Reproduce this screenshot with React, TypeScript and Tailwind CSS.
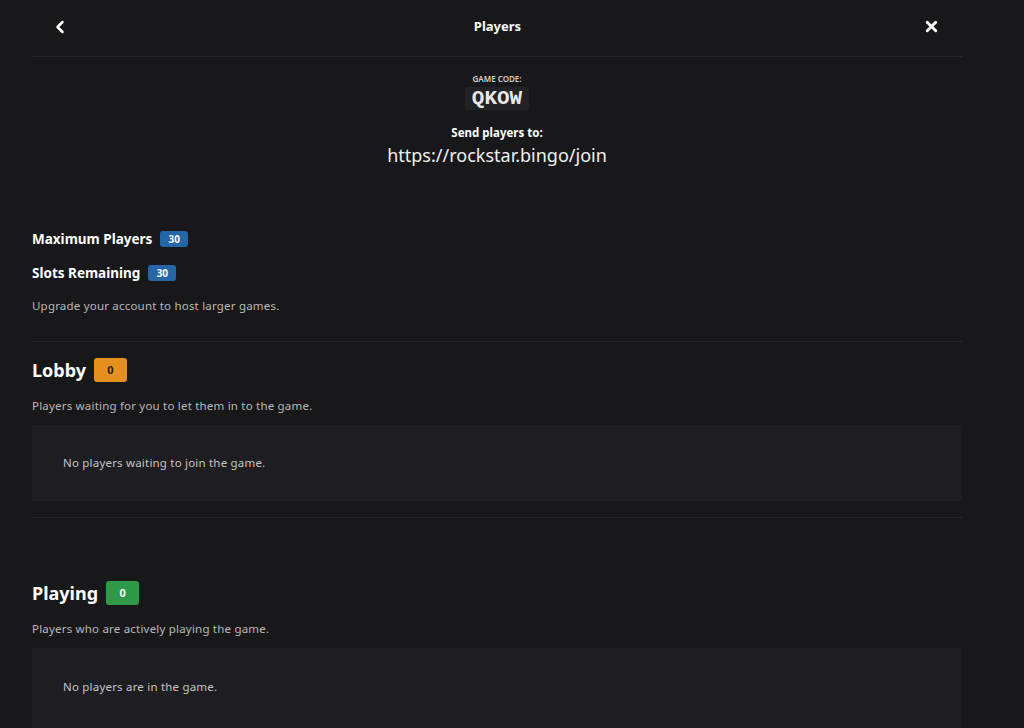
import { ChevronLeft, X } from 'lucide-react';

const font = { fontFamily: '"Noto Sans", "Open Sans", sans-serif' };

const Badge = ({ value, color, big }: { value: number; color: string; big?: boolean }) => (
    <span
        className={`inline-flex items-center justify-center rounded-[3px] font-bold text-white ${color} ${big ? 'h-[24px] w-[33px] text-[11px]' : 'h-[16px] w-[28px] text-[10px]'}`}
    >
        {value}
    </span>
);

const App = () => {
    return (
        <div className="h-[728px] w-full overflow-hidden bg-[#18181a] text-white" style={font}>
            <div className="ml-[32px] w-[930px]">
                <header className="flex h-[57px] items-center justify-between border-b border-[#28282a] pb-[3px]">
                    <button className="ml-[18px] flex h-[20px] w-[20px] items-center justify-center">
                        <ChevronLeft size={20} strokeWidth={3} className="text-white" />
                    </button>
                    <h1 className="ml-[3px] text-[13px] font-bold">Players</h1>
                    <button className="mr-[20px] flex h-[20px] w-[20px] items-center justify-center">
                        <X size={17} strokeWidth={4} className="text-white" />
                    </button>
                </header>

                <section className="flex flex-col items-center pt-[16px]">
                    <div className="text-[8px] font-semibold uppercase leading-[12px] text-[#d4d4d4]">Game code:</div>
                    <div
                        className="mt-[2px] rounded-[3px] bg-[#222226] px-[7px] text-[21px] font-bold leading-[23px] text-[#e8e8e8]"
                        style={{ fontFamily: '"Liberation Mono", "DejaVu Sans Mono", monospace' }}
                    >
                        QKOW
                    </div>
                    <div className="mt-[16px] text-[11.5px] font-bold leading-[14px]">Send players to:</div>
                    <div className="mt-[3px] text-[18px] leading-[24px] text-[#f0f0f0]">https://rockstar.bingo/join</div>
                </section>

                <section className="mt-[62px] flex flex-col">
                    <div className="flex items-center gap-[8px]">
                        <span className="text-[13.5px] font-bold">Maximum Players</span>
                        <Badge value={30} color="bg-[#2566a8]" />
                    </div>
                    <div className="mt-[14px] flex items-center gap-[8px]">
                        <span className="text-[13.5px] font-bold">Slots Remaining</span>
                        <Badge value={30} color="bg-[#2566a8]" />
                    </div>
                    <p className="mt-[13px] text-[11.5px] tracking-[0.2px] text-[#b8b8b8]">Upgrade your account to host larger games.</p>
                </section>

                <div className="mt-[27px] border-t border-[#28282a]" />

                <section className="pt-[14px]">
                    <div className="flex items-center gap-[8px]">
                        <h2 className="text-[18px] font-bold leading-[28px]">Lobby</h2>
                        <span className="inline-flex h-[24px] w-[33px] items-center justify-center rounded-[3px] bg-[#e58f1f] text-[11px] font-bold text-[#222]">0</span>
                    </div>
                    <p className="mt-[13px] text-[11.5px] tracking-[0.2px] text-[#b8b8b8]">Players waiting for you to let them in to the game.</p>
                    <div className="mt-[11px] flex h-[76px] items-center bg-[#1e1e22] pl-[31px]">
                        <span className="text-[11.5px] tracking-[0.2px] text-[#c4c4c4]">No players waiting to join the game.</span>
                    </div>
                </section>

                <div className="mt-[16px] border-t border-[#28282a]" />

                <section className="pt-[61px]">
                    <div className="flex items-center gap-[8px]">
                        <h2 className="text-[18px] font-bold leading-[28px]">Playing</h2>
                        <Badge value={0} color="bg-[#2e9a48]" big />
                    </div>
                    <p className="mt-[13px] text-[11.5px] tracking-[0.2px] text-[#b8b8b8]">Players who are actively playing the game.</p>
                    <div className="mt-[11px] flex h-[90px] items-start bg-[#1e1e22] pl-[31px] pt-[30px]">
                        <span className="text-[11.5px] tracking-[0.2px] text-[#c4c4c4]">No players are in the game.</span>
                    </div>
                </section>
            </div>
        </div>
    );
};

export default App;
